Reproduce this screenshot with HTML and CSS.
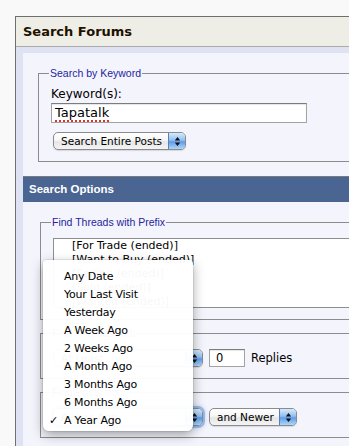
FILE: index.html
```html
<!DOCTYPE html>
<html lang="en">
<head>
    <meta charset="UTF-8">
    <meta name="viewport" content="width=device-width, initial-scale=1.0">
    <title>Search Forums</title>
    <link rel="stylesheet" href="styles.css">
</head>
<body>
    <div class="forum-box">
        <div class="box-head">Search Forums</div>
        <div class="box-body">
            <div class="panel keyword-panel">
                <fieldset class="group">
                    <legend>Search by Keyword</legend>
                    <div class="field-label">Keyword(s):</div>
                    <div class="text-input keyword-input"><span class="misspelt">Tapatalk</span></div>
                    <div class="aqua-select posts-select">
                        <span class="select-text">Search Entire Posts</span>
                        <span class="select-arrows"><svg width="7" height="11" viewBox="0 0 7 11"><path d="M3.5 1L6.2 4.4H0.8Z M0.8 6.6H6.2L3.5 10Z" fill="#111"/></svg></span>
                    </div>
                </fieldset>
            </div>

            <div class="panel options-panel">
                <div class="panel-head">Search Options</div>
                <div class="panel-inner">
                    <fieldset class="group">
                        <legend>Find Threads with Prefix</legend>
                        <div class="listbox">
                            <div>[For Trade (ended)]</div>
                            <div>[Want to Buy (ended)]</div>
                            <div>[Selling (ended)]</div>
                            <div>[Sold (ended)]</div>
                            <div>[Wanted (ended)]</div>
                        </div>
                    </fieldset>

                    <fieldset class="group">
                        <legend>Find Threads with</legend>
                        <div class="field-row">
                            <div class="aqua-select wide-select">
                                <span class="select-text">At Least</span>
                                <span class="select-arrows"><svg width="7" height="11" viewBox="0 0 7 11"><path d="M3.5 1L6.2 4.4H0.8Z M0.8 6.6H6.2L3.5 10Z" fill="#111"/></svg></span>
                            </div>
                            <div class="text-input count-input">0</div>
                            <span class="row-text">Replies</span>
                        </div>
                    </fieldset>

                    <fieldset class="group">
                        <legend>Find Posts from</legend>
                        <div class="field-row">
                            <div class="aqua-select wide-select focused">
                                <span class="select-text">A Year Ago</span>
                                <span class="select-arrows"><svg width="7" height="11" viewBox="0 0 7 11"><path d="M3.5 1L6.2 4.4H0.8Z M0.8 6.6H6.2L3.5 10Z" fill="#111"/></svg></span>
                            </div>
                            <div class="aqua-select newer-select">
                                <span class="select-text">and Newer</span>
                                <span class="select-arrows"><svg width="7" height="11" viewBox="0 0 7 11"><path d="M3.5 1L6.2 4.4H0.8Z M0.8 6.6H6.2L3.5 10Z" fill="#111"/></svg></span>
                            </div>
                        </div>
                    </fieldset>
                </div>
            </div>
        </div>
    </div>

    <!-- open popup of the "Find Posts from" select -->
    <ul class="date-menu">
        <li>Any Date</li>
        <li>Your Last Visit</li>
        <li>Yesterday</li>
        <li>A Week Ago</li>
        <li>2 Weeks Ago</li>
        <li>A Month Ago</li>
        <li>3 Months Ago</li>
        <li>6 Months Ago</li>
        <li class="checked">A Year Ago</li>
    </ul>
</body>
</html>
```

FILE: styles.css
```css
html, body {
    margin: 0;
    overflow: hidden;
}
body {
    position: relative;
    height: 446px;
    background: #f9f9f9;
    font-family: "DejaVu Sans", Verdana, sans-serif;
    font-size: 12px;
    color: #000;
}
.forum-box {
    box-sizing: border-box;
    margin: 16px 0 0 15px;
    width: 334px;
    overflow: hidden;
    border: 1px solid #6f6f6f;
    border-right: none;
    background: #dfe2f2;
}
.box-head {
    height: 29px;
    line-height: 29px;
    padding-left: 7px;
    background: #eeede6;
    border-bottom: 1px solid #ababab;
    font-weight: bold;
    font-size: 13px;
    color: #1f1100;
}
.box-body {
    padding: 6px 0 0 7px;
}
.panel {
    background: #f4f4fc;
}
.keyword-panel {
    padding: 14px 0 14px 15px;
}
.panel-head {
    height: 25px;
    line-height: 25px;
    padding-left: 6px;
    border-top: 1px solid #7b7b7b;
    background: #4b6592;
    color: #fff;
    font-family: "Liberation Sans", Arial, sans-serif;
    font-weight: bold;
    font-size: 11.5px;
}
.panel-inner {
    padding: 14px 0 20px 17px;
}
.group {
    box-sizing: border-box;
    width: 330px;
    margin: 0;
    padding: 0 12px 11px;
    border: 1px solid #8c8c8c;
}
.group + .group {
    margin-top: 7px;
}
legend {
    margin-left: -2px;
    padding: 0 1px;
    font-family: "Liberation Sans", Arial, sans-serif;
    font-size: 10.5px;
    line-height: 13px;
    color: #24249e;
}
.field-label {
    margin-top: 7px;
    line-height: 14px;
}
.text-input {
    box-sizing: border-box;
    background: #fff;
    border: 1px solid #a3a3a3;
    border-top-color: #7c7c7c;
    box-shadow: inset 0 1px 1px rgba(0, 0, 0, 0.1);
}
.keyword-input {
    margin-top: 2px;
    width: 256px;
    height: 20px;
    padding-left: 3px;
    font-size: 13px;
    line-height: 18px;
}
.misspelt {
    text-decoration: underline dotted #e0302a;
    text-decoration-thickness: 2px;
    text-underline-offset: 3px;
}
.aqua-select {
    box-sizing: border-box;
    display: flex;
    height: 18px;
    border: 1px solid #8b8b8b;
    border-radius: 5px;
    overflow: hidden;
    background: linear-gradient(#ffffff, #f6f6f6 45%, #e6e6e6 55%, #f4f4f4);
    box-shadow: 0 1px 1px rgba(0, 0, 0, 0.12);
    font-size: 10.5px;
}
.select-text {
    flex: 1;
    padding-left: 7px;
    line-height: 16px;
    white-space: nowrap;
}
.select-arrows {
    width: 16px;
    display: flex;
    align-items: center;
    justify-content: center;
    border-left: 1px solid #5a7fb4;
    background: linear-gradient(#d6e9fc, #92c0f1 45%, #5f9be6 55%, #acd8fc);
}
.posts-select {
    margin: 9px 0 0 2px;
    width: 133px;
}
.listbox {
    box-sizing: border-box;
    margin-top: 9px;
    width: 300px;
    height: 70px;
    padding-left: 18px;
    overflow: hidden;
    background: #fff;
    border: 1px solid #8e8e8e;
    font-size: 11px;
    line-height: 14px;
}
.field-row {
    display: flex;
    align-items: center;
    gap: 6px;
    margin-top: 9px;
    height: 18px;
}
.wide-select {
    width: 150px;
}
.newer-select {
    width: 88px;
}
.focused {
    box-shadow: 0 0 0 2px rgba(96, 150, 222, 0.55), 0 0 4px 2px rgba(96, 150, 222, 0.35);
}
.count-input {
    width: 36px;
    height: 18px;
    padding-left: 6px;
    font-size: 11.5px;
    line-height: 16px;
}
.row-text {
    font-size: 11.5px;
}
.date-menu {
    position: absolute;
    left: 43px;
    top: 260px;
    width: 150px;
    margin: 0;
    padding: 8px 0 1px;
    list-style: none;
    background: rgba(255, 255, 255, 0.97);
    border-radius: 4px 4px 6px 6px;
    box-shadow: 0 4px 12px rgba(0, 0, 0, 0.35), 0 0 0 1px rgba(0, 0, 0, 0.07);
    font-size: 11px;
    letter-spacing: -0.2px;
}
.date-menu li {
    position: relative;
    height: 18px;
    line-height: 18px;
    padding-left: 21px;
}
.date-menu .checked::before {
    content: "\2713";
    position: absolute;
    left: 6px;
}
```
